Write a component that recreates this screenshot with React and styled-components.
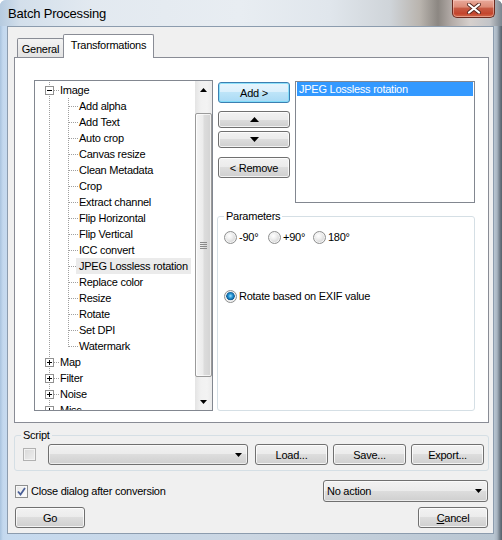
import React from 'react';
import styled, { createGlobalStyle, css } from 'styled-components';

const GlobalStyle = createGlobalStyle`
  html, body { margin: 0; padding: 0; }
  body {
    width: 502px; height: 540px; overflow: hidden; background: #fff;
    font-family: "Liberation Sans", Arial, sans-serif; font-size: 11px; color: #000;
    letter-spacing: -0.25px;
  }
  *, *::before, *::after { box-sizing: border-box; }
`;

const Window = styled.div`
  width: 502px; height: 540px; display: flex; flex-direction: column;
  background: linear-gradient(90deg, #a9c3de 0px, #c3d8ee 3px, #c6daef 7px, #cbd6e2 50%, #b9c6d2 494px, #aab6c2 497px, #6e7a86 500px, #56606a 502px);
  border-radius: 6px 6px 0 0;
  overflow: hidden;
`;

const TitleBar = styled.div`
  height: 26px; flex: none; display: flex; align-items: flex-start;
  padding-left: 8px;
  background: linear-gradient(90deg, #b6cbe0 0px, #d3dfeb 20px, #e2e9f0 90px, #e8edf2 240px, #e0e6ec 330px, #cfd4d9 390px, #b9b4ae 420px, #8c8782 438px, #b4aca8 452px, #d6d0cd 470px, #c2c4c8 490px, #7b858f 502px);
`;

const Title = styled.div`
  font-size: 13px; letter-spacing: -0.2px; line-height: 28px; color: #000;
`;

const CloseButton = styled.div`
  margin-left: auto; margin-right: 7px; width: 43px; height: 18px;
  border: 1px solid #6b2a1f; border-top: none; border-radius: 0 0 5px 5px;
  background: linear-gradient(#e9a99a 0%, #dd8c78 40%, #c75a43 50%, #c4452d 80%, #d06b4c 100%);
  box-shadow: inset 0 0 0 1px rgba(255, 220, 210, 0.45);
  display: flex; align-items: center; justify-content: center;
`;

const Client = styled.div`
  flex: 1; margin: 0 8px 6px 7px; background: #f0f0f0;
  border: 1px solid #8c9cae;
  padding: 7px 4px 4px 6px;
  display: flex; flex-direction: column;
`;

const TabStrip = styled.div`
  height: 23px; flex: none; display: flex; align-items: flex-end; padding-left: 3px;
`;

const Tab = styled.div`
  display: flex; align-items: center; justify-content: center;
  border: 1px solid #898c95; border-bottom: none; border-radius: 2px 2px 0 0;
  ${p => p.$active ? css`
    width: 91px; height: 24px; margin-left: -1px; margin-bottom: -1px;
    background: #fff; position: relative; z-index: 1; padding-bottom: 3px;
  ` : css`
    width: 47px; height: 19px; padding-top: 1px;
    background: linear-gradient(#f3f3f3, #e3e3e3);
  `}
`;

const Panel = styled.div`
  height: 366px; flex: none; background: #fff; border: 1px solid #898c95;
  padding: 22px 0 0 19px; display: flex; align-items: flex-start;
`;

const Tree = styled.div`
  width: 179px; height: 331px; flex: none; display: flex;
  border: 1px solid #828790; background: #fff;
`;

const TreeBody = styled.div`
  flex: 1; overflow: hidden; padding-top: 1px;
`;

const TreeRow = styled.div`
  height: 16px; display: flex; align-items: center; padding-left: 5px;
  white-space: nowrap;
`;

const TreeLabel = styled.span`
  height: 16px; line-height: 16px; margin-left: -2px; padding: 0 3px;
  background: ${p => (p.$selected ? '#ebebeb' : 'transparent')};
`;

const ScrollBar = styled.div`
  width: 17px; flex: none; display: flex; flex-direction: column;
  background: linear-gradient(90deg, #e4e4e4, #f1f1f1 35%, #f3f3f3 70%, #ebebeb);
`;

const ScrollArrow = styled.div`
  height: 17px; flex: none; display: flex; align-items: center; justify-content: center;
`;

const Track = styled.div`
  flex: 1; padding: 15px 0 0 0;
`;

const Thumb = styled.div`
  height: 264px; border: 1px solid #9a9a9a; border-radius: 2px;
  background: linear-gradient(90deg, #f4f4f4, #ececec 45%, #dcdcdc 55%, #d3d3d3);
  box-shadow: inset 0 0 0 1px rgba(255, 255, 255, 0.7);
  display: flex; align-items: center; justify-content: center;
`;

const RightCol = styled.div`
  width: 258px; margin-left: 4px; display: flex; flex-direction: column;
`;

const TopRow = styled.div`
  display: flex; align-items: flex-start; margin-top: 1px;
`;

const ButtonCol = styled.div`
  width: 72px; margin-left: 1px; padding-top: 1px; display: flex; flex-direction: column;
`;

const Button = styled.div`
  width: ${p => (p.$w ? `${p.$w}px` : '100%')};
  height: ${p => p.$h || 21}px;
  margin-top: ${p => p.$mt || 0}px;
  margin-left: ${p => p.$ml || 0}px;
  flex: none;
  border: 1px solid ${p => (p.$default ? '#3c7fb1' : '#707070')};
  border-radius: 3px;
  background: ${p => (p.$default
    ? 'linear-gradient(#e7f5fd 0%, #d9effc 50%, #bde4f8 50%, #a9daf5 100%)'
    : 'linear-gradient(#f2f2f2 0%, #ebebeb 50%, #dddddd 50%, #cfcfcf 100%)')};
  box-shadow: inset 0 0 0 1px ${p => (p.$default ? 'rgba(120, 220, 250, 0.8)' : 'rgba(255, 255, 255, 0.75)')};
  display: flex; align-items: center; justify-content: center;
  color: #000;
`;

const ListBox = styled.div`
  width: 180px; height: 122px; margin-left: 5px; flex: none;
  border: 1px solid #828790; background: #fff; padding: 0 1px;
`;

const ListItem = styled.div`
  height: 14px; line-height: 14px; padding-left: 2px;
  background: #3399ff; color: #fff;
`;

const GroupBox = styled.fieldset`
  margin: ${p => p.$mt || 0}px 0 0 0;
  min-width: 0;
  border: 1px solid #d5dfe5; border-radius: 3px;
  padding: 0 6px ${p => p.$pb || 0}px 6px;
  ${p => p.$h && css`height: ${p.$h}px;`}
`;

const Legend = styled.legend`
  padding: 0 2px; line-height: 13px; font-size: 11px;
`;

const RadioRow = styled.div`
  display: grid; grid-template-columns: ${p => p.$cols || 'auto'}; margin-top: ${p => p.$mt}px;
`;

const RadioItem = styled.label`
  display: flex; align-items: center; gap: 2px; height: 13px; line-height: 13px;
  white-space: nowrap;
`;

const RadioCircle = styled.span`
  width: 13px; height: 13px; border-radius: 50%; flex: none;
  border: 1px solid #8e8f8f;
  background: ${p => (p.$checked
    ? 'radial-gradient(circle at 50% 45%, #9fe0ff 0px, #2a9ad8 2px, #0d5a94 4px, #e9e9e9 4.6px, #f6f6f6 100%)'
    : 'radial-gradient(circle at 40% 35%, #ffffff 0px, #f0f0f0 3px, #dcdcdc 6px)')};
  box-shadow: inset 0 0 0 1px #f4f4f4;
`;

const ScriptRow = styled.div`
  display: flex; align-items: center; margin-top: 2px; padding-left: 2px;
`;

const CheckBox = styled.span`
  width: 13px; height: 13px; flex: none; display: flex; align-items: center; justify-content: center;
  border: 1px solid ${p => (p.$disabled ? '#b1b1b1' : '#8e8f8f')};
  background: ${p => (p.$disabled
    ? 'linear-gradient(135deg, #d8d8d8, #eeeeee)'
    : 'linear-gradient(135deg, #e6e6e6, #ffffff)')};
  box-shadow: inset 0 0 0 1px ${p => (p.$disabled ? '#f2f2f2' : '#f8f8f8')};
`;

const Combo = styled.div`
  width: ${p => p.$w}px; height: ${p => p.$h}px; flex: none;
  margin-left: ${p => p.$ml || 0}px;
  border: 1px solid #707070; border-radius: 3px;
  background: linear-gradient(#f2f2f2 0%, #ebebeb 50%, #dddddd 50%, #cfcfcf 100%);
  box-shadow: inset 0 0 0 1px rgba(255, 255, 255, 0.6);
  display: flex; align-items: center; justify-content: space-between;
  padding: 0 5px 0 3px;
`;

const BottomRow = styled.div`
  display: flex; align-items: center; height: 22px; margin-top: 9px; padding: 0 1px;
`;

const CheckLabel = styled.label`
  display: flex; align-items: center; gap: 3px;
`;

const ActionRow = styled.div`
  display: flex; justify-content: space-between; margin-top: 5px; padding: 0 1px;
`;

const Spacer = styled.div` flex: 1; `;

const DASH = { stroke: '#a0a0a0', strokeWidth: 1, strokeDasharray: '1 1', shapeRendering: 'crispEdges' };

function Guide({ v, h, expander }) {
  return (
    <svg width="19" height="16" viewBox="0 0 19 16" style={{ flex: 'none' }}>
      {v && <line x1="9.5" y1="0" x2="9.5" y2={v === 'half' ? 9 : 16} {...DASH} />}
      {h && <line x1={expander ? 14 : 10} y1="8.5" x2="19" y2="8.5" {...DASH} />}
      {expander && (
        <g shapeRendering="crispEdges">
          <rect x="5.5" y="4.5" width="8" height="8" fill="#fff" stroke="#919191" />
          <line x1="7" y1="8.5" x2="12" y2="8.5" stroke="#000" />
          {expander === 'plus' && <line x1="9.5" y1="6" x2="9.5" y2="11" stroke="#000" />}
        </g>
      )}
    </svg>
  );
}

const children = [
  'Add alpha', 'Add Text', 'Auto crop', 'Canvas resize', 'Clean Metadata', 'Crop',
  'Extract channel', 'Flip Horizontal', 'Flip Vertical', 'ICC convert', 'JPEG Lossless rotation',
  'Replace color', 'Resize', 'Rotate', 'Set DPI', 'Watermark',
];
const collapsed = ['Map', 'Filter', 'Noise', 'Misc'];

const Arrow = ({ dir = 'down', w = 7, h = 4 }) => (
  <svg width={w} height={h} viewBox={`0 0 ${w} ${h}`}>
    <polygon points={dir === 'down' ? `0,0 ${w},0 ${w / 2},${h}` : `0,${h} ${w},${h} ${w / 2},0`} fill="#000" />
  </svg>
);

export default function App() {
  return (
    <>
      <GlobalStyle />
      <Window>
        <TitleBar>
          <Title>Batch Processing</Title>
          <CloseButton>
            <svg width="16" height="11" viewBox="0 0 16 11">
              <path d="M3 1.5 L13 9.5 M13 1.5 L3 9.5" stroke="#5a2a22" strokeWidth="4" strokeLinecap="round" />
              <path d="M3 1.5 L13 9.5 M13 1.5 L3 9.5" stroke="#fff" strokeWidth="2.2" strokeLinecap="round" />
            </svg>
          </CloseButton>
        </TitleBar>
        <Client>
          <TabStrip>
            <Tab>General</Tab>
            <Tab $active>Transformations</Tab>
          </TabStrip>
          <Panel>
            <Tree>
              <TreeBody>
                <TreeRow>
                  <Guide v h expander="minus" />
                  <TreeLabel>Image</TreeLabel>
                </TreeRow>
                {children.map((c, i) => (
                  <TreeRow key={c}>
                    <Guide v />
                    <Guide v={i === children.length - 1 ? 'half' : true} h />
                    <TreeLabel $selected={c === 'JPEG Lossless rotation'}>{c}</TreeLabel>
                  </TreeRow>
                ))}
                {collapsed.map(c => (
                  <TreeRow key={c}>
                    <Guide v h expander="plus" />
                    <TreeLabel>{c}</TreeLabel>
                  </TreeRow>
                ))}
              </TreeBody>
              <ScrollBar>
                <ScrollArrow><Arrow dir="up" /></ScrollArrow>
                <Track>
                  <Thumb>
                    <svg width="7" height="7" viewBox="0 0 7 7">
                      <g stroke="#8a8a8a" shapeRendering="crispEdges">
                        <line x1="0" y1="0.5" x2="7" y2="0.5" />
                        <line x1="0" y1="2.5" x2="7" y2="2.5" />
                        <line x1="0" y1="4.5" x2="7" y2="4.5" />
                        <line x1="0" y1="6.5" x2="7" y2="6.5" />
                      </g>
                    </svg>
                  </Thumb>
                </Track>
                <ScrollArrow><Arrow dir="down" /></ScrollArrow>
              </ScrollBar>
            </Tree>
            <RightCol>
              <TopRow>
                <ButtonCol>
                  <Button $default>Add &gt;</Button>
                  <Button $h={17} $mt={8}><Arrow dir="up" w={9} h={5} /></Button>
                  <Button $h={17} $mt={3}><Arrow dir="down" w={9} h={5} /></Button>
                  <Button $mt={9}>&lt; Remove</Button>
                </ButtonCol>
                <ListBox>
                  <ListItem>JPEG Lossless rotation</ListItem>
                </ListBox>
              </TopRow>
              <GroupBox $mt={7} $h={201}>
                <Legend>Parameters</Legend>
                <RadioRow $mt={8} $cols="44px 45px auto">
                  <RadioItem><RadioCircle />-90°</RadioItem>
                  <RadioItem><RadioCircle />+90°</RadioItem>
                  <RadioItem><RadioCircle />180°</RadioItem>
                </RadioRow>
                <RadioRow $mt={46}>
                  <RadioItem><RadioCircle $checked />Rotate based on EXIF value</RadioItem>
                </RadioRow>
              </GroupBox>
            </RightCol>
          </Panel>
          <GroupBox $mt={6} $pb={5}>
            <Legend>Script</Legend>
            <ScriptRow>
              <CheckBox $disabled />
              <Combo $w={200} $h={21} $ml={12}>
                <span />
                <Arrow />
              </Combo>
              <Button $w={73} $ml={7}>Load...</Button>
              <Button $w={73} $ml={5}>Save...</Button>
              <Button $w={73} $ml={5}>Export...</Button>
            </ScriptRow>
          </GroupBox>
          <BottomRow>
            <CheckLabel>
              <CheckBox>
                <svg width="9" height="9" viewBox="0 0 9 9">
                  <path d="M1 4.5 L3.5 7.5 L8 1" fill="none" stroke="#4a5f97" strokeWidth="1.8" />
                </svg>
              </CheckBox>
              Close dialog after conversion
            </CheckLabel>
            <Spacer />
            <Combo $w={165} $h={22}>
              <span>No action</span>
              <Arrow />
            </Combo>
          </BottomRow>
          <ActionRow>
            <Button $w={70}>Go</Button>
            <Button $w={70}><span><u>C</u>ancel</span></Button>
          </ActionRow>
        </Client>
      </Window>
    </>
  );
}
